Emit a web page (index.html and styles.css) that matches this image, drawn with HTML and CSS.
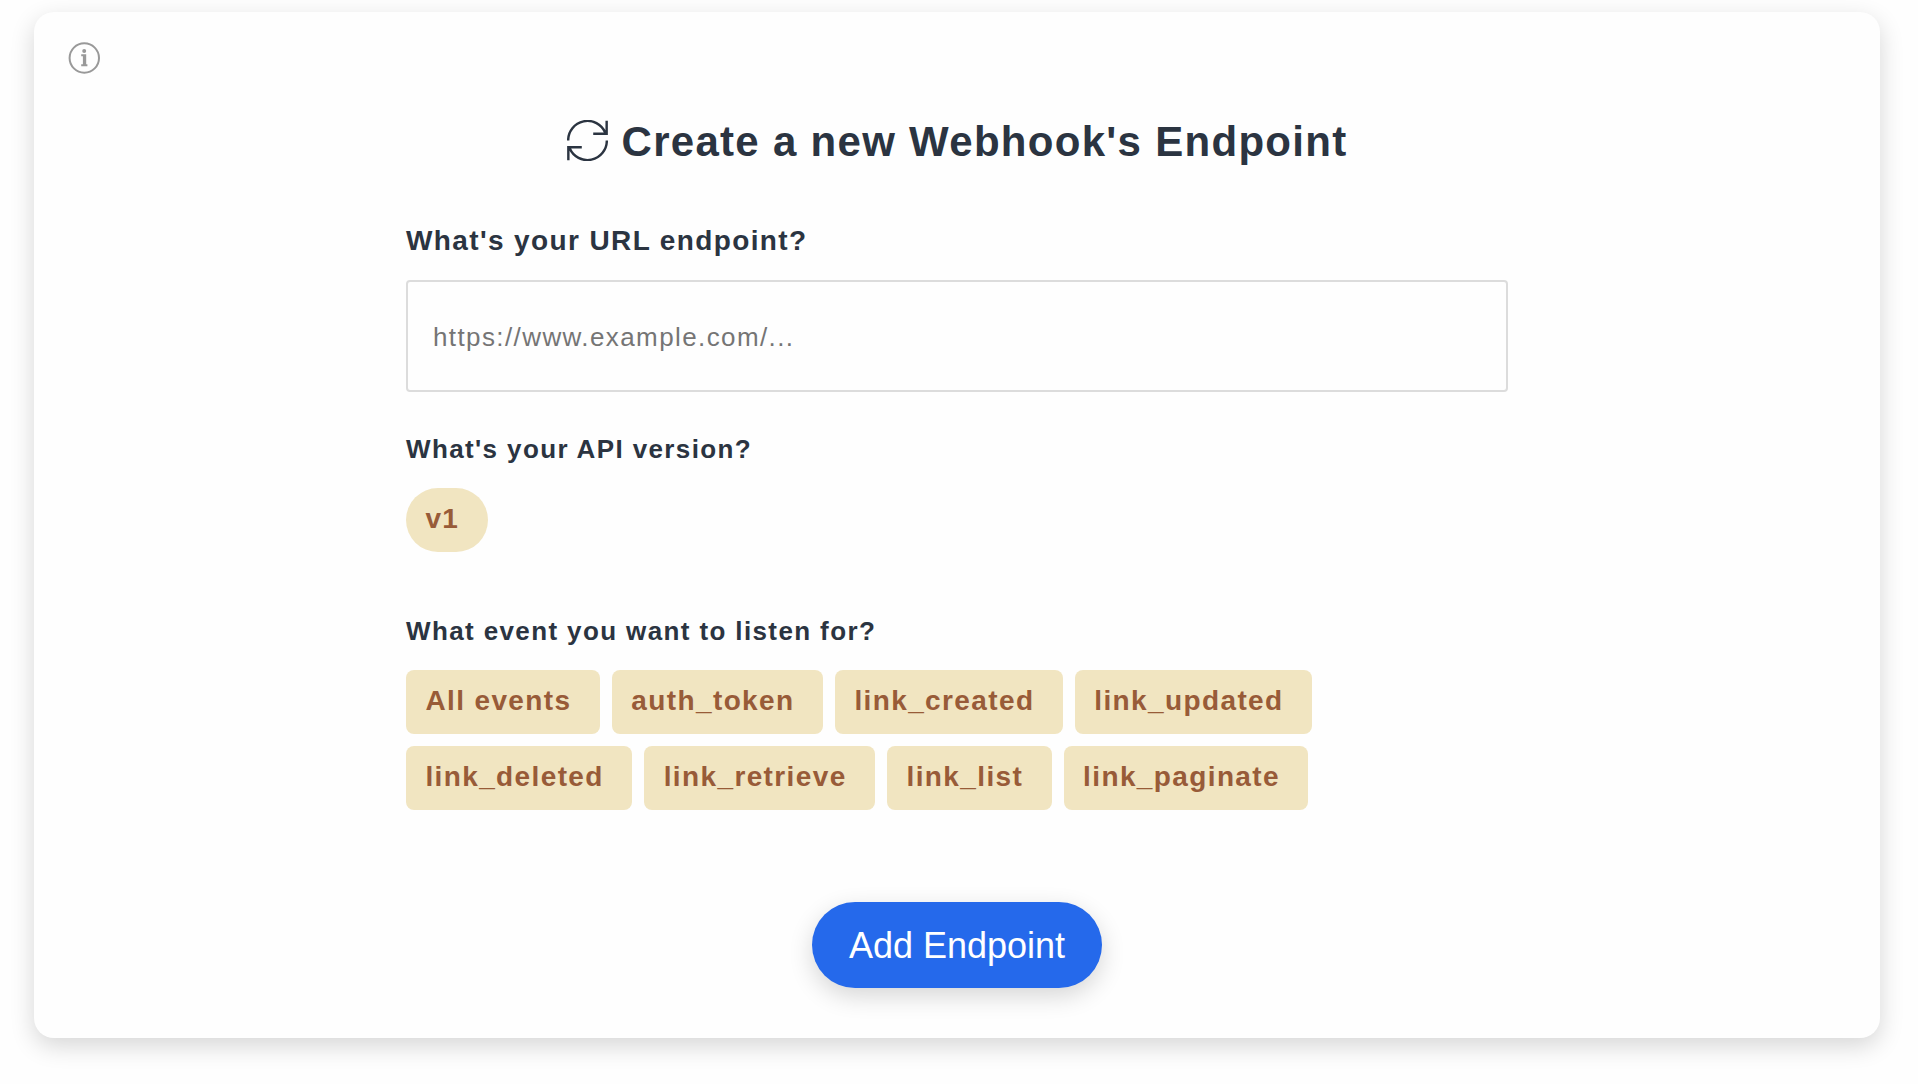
FILE: index.html
```html
<!DOCTYPE html>
<html lang="en">
<head>
<meta charset="utf-8">
<title>Create a new Webhook's Endpoint</title>
<link rel="stylesheet" href="styles.css">
</head>
<body>
<main class="card">
  <svg class="info" viewBox="0 0 32 32" aria-label="Info">
    <circle cx="16.3" cy="16" r="14.7" fill="none" stroke="currentColor" stroke-width="2"/>
    <circle cx="16.2" cy="9.1" r="2" fill="currentColor"/>
    <path d="M13.2 12.2H18.2V22.2H19.4V24.2H13.2V22.2H14.9V14.3H13.2Z" fill="currentColor"/>
  </svg>
  <form class="form">
    <h1 class="title">
      <svg class="refresh" viewBox="0 0 122 122" fill="none" stroke="currentColor" stroke-width="7.2">
        <path d="M3.5 61A57.5 57.5 0 0 1 114 38M118 2V41H78"/>
        <path d="M118.5 61A57.5 57.5 0 0 1 8 84M4 120V81H44"/>
      </svg>
      <span>Create a new Webhook's Endpoint</span>
    </h1>
    <label class="label label-url" for="url">What's your URL endpoint?</label>
    <input class="url" id="url" type="text" placeholder="https://www.example.com/...">
    <h2 class="label label-version">What's your API version?</h2>
    <div class="chips">
      <span class="chip chip-round">v1</span>
    </div>
    <h2 class="label label-events">What event you want to listen for?</h2>
    <div class="chips">
      <span class="chip">All events</span>
      <span class="chip">auth_token</span>
      <span class="chip">link_created</span>
      <span class="chip">link_updated</span>
      <span class="chip">link_deleted</span>
      <span class="chip">link_retrieve</span>
      <span class="chip">link_list</span>
      <span class="chip">link_paginate</span>
    </div>
    <button class="submit" type="button">Add Endpoint</button>
  </form>
</main>
</body>
</html>
```
FILE: styles.css
```css
* {
  box-sizing: border-box;
}

body {
  margin: 0;
  padding: 12px 38px 46px 34px;
  background: #fefefe;
  color: #2b3441;
  font-family: "Liberation Sans", Arial, Helvetica, sans-serif;
  letter-spacing: 1.38px;
}

.card {
  position: relative;
  height: 1026px;
  padding-top: 100px;
  border-radius: 20px;
  background: #fefefe;
  box-shadow: 0 8px 24px rgba(0, 0, 0, 0.16);
}

.info {
  position: absolute;
  top: 30px;
  left: 34px;
  width: 32px;
  height: 32px;
  color: #999;
}

.form {
  display: flex;
  flex-direction: column;
  width: 1102px;
  margin: 0 auto;
}

.title {
  display: flex;
  align-items: center;
  justify-content: center;
  gap: 14px;
  margin: 0 0 49px;
  font-size: 42px;
  line-height: 60px;
  letter-spacing: 1.29px;
}

.refresh {
  width: 41px;
  height: 41px;
  margin-bottom: 3px;
}

.label {
  margin: 0;
  font-weight: 700;
  line-height: 40px;
}

.label-url {
  margin-bottom: 19px;
  font-size: 28px;
}

.label-version,
.label-events {
  margin-bottom: 19px;
  font-size: 26px;
}

.label-version {
  margin-top: 37px;
}

.label-events {
  margin-top: 59px;
}

.url {
  width: 100%;
  height: 112px;
  padding: 2px 26px 0 25px;
  border: 2px solid #dcdcdc;
  border-radius: 4px;
  background: transparent;
  font: 26px "Liberation Sans", Arial, Helvetica, sans-serif;
  letter-spacing: 1.4px;
}

.url::placeholder {
  color: #757575;
}

.chips {
  display: flex;
  flex-wrap: wrap;
  gap: 12px;
}

.chip {
  height: 64px;
  padding: 0 28.5px 0 19.4px;
  border-radius: 8px;
  background: #f1e5c1;
  color: #985b38;
  font-size: 28px;
  font-weight: 700;
  line-height: 61px;
  letter-spacing: 1.38px;
}

.chip-round {
  border-radius: 32px;
}

.submit {
  align-self: center;
  width: 290px;
  height: 86px;
  margin-top: 92px;
  padding: 2px 0 0;
  border: 0;
  border-radius: 43px;
  background: #2569eb;
  box-shadow: 0 8px 24px rgba(0, 0, 0, 0.16);
  color: #fff;
  font: 36px "Liberation Sans", Arial, Helvetica, sans-serif;
  letter-spacing: 0;
}
```
